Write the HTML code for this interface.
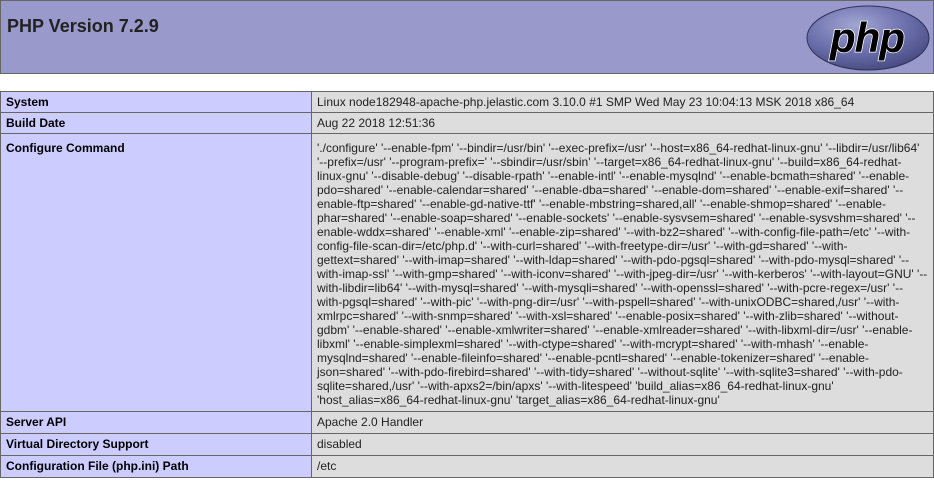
<!DOCTYPE html>
<html><head><meta charset="utf-8"><style>
body{margin:0;background:#fff;font-family:"Liberation Sans",sans-serif;color:#222}
table{border-collapse:collapse;width:934px;border:0}
td{border:1px solid #666;font-size:12px;vertical-align:baseline;padding:3px 5px;line-height:14px}
.h{background:#99c;height:72px;vertical-align:top;padding:0}
.h h1{font-size:18px;margin:0;position:absolute;left:6px;top:18px;color:#222}
.e{background:#ccf;width:300px;font-weight:bold;color:#000}
.v{background:#ddd;white-space:nowrap}
.t td{padding-bottom:4px}
</style></head><body>
<table><tr><td class="h" style="position:relative;height:72px">
<h1>PHP Version 7.2.9</h1>
<svg style="position:absolute;left:805px;top:4px" width="124" height="66" viewBox="0 0 124 66">
<defs><radialGradient id="g" cx="0.4" cy="0.3" r="0.75"><stop offset="0" stop-color="#a2a6d2"/><stop offset="0.55" stop-color="#6c70ad"/><stop offset="1" stop-color="#45487d"/></radialGradient></defs>
<ellipse cx="62" cy="33" rx="61" ry="32" fill="url(#g)" stroke="#2f3158" stroke-width="1"/>
<text x="61" y="47" text-anchor="middle" font-family="Liberation Sans,sans-serif" font-style="italic" font-weight="bold" font-size="42" fill="#000" stroke="#fff" stroke-width="1.5" paint-order="stroke" letter-spacing="-1">php</text>
</svg>
</td></tr></table>
<div style="height:17px"></div>
<table>
<tr><td class="e">System</td><td class="v">Linux node182948-apache-php.jelastic.com 3.10.0 #1 SMP Wed May 23 10:04:13 MSK 2018 x86_64</td></tr>
<tr><td class="e">Build Date</td><td class="v">Aug 22 2018 12:51:36</td></tr>
<tr><td class="e" style="padding-top:7px;padding-bottom:4px">Configure Command</td><td class="v" style="padding-top:7px;padding-bottom:4px">'./configure' '--enable-fpm' '--bindir=/usr/bin' '--exec-prefix=/usr' '--host=x86_64-redhat-linux-gnu' '--libdir=/usr/lib64'<br>
'--prefix=/usr' '--program-prefix=' '--sbindir=/usr/sbin' '--target=x86_64-redhat-linux-gnu' '--build=x86_64-redhat-<br>
linux-gnu' '--disable-debug' '--disable-rpath' '--enable-intl' '--enable-mysqlnd' '--enable-bcmath=shared' '--enable-<br>
pdo=shared' '--enable-calendar=shared' '--enable-dba=shared' '--enable-dom=shared' '--enable-exif=shared' '--<br>
enable-ftp=shared' '--enable-gd-native-ttf' '--enable-mbstring=shared,all' '--enable-shmop=shared' '--enable-<br>
phar=shared' '--enable-soap=shared' '--enable-sockets' '--enable-sysvsem=shared' '--enable-sysvshm=shared' '--<br>
enable-wddx=shared' '--enable-xml' '--enable-zip=shared' '--with-bz2=shared' '--with-config-file-path=/etc' '--with-<br>
config-file-scan-dir=/etc/php.d' '--with-curl=shared' '--with-freetype-dir=/usr' '--with-gd=shared' '--with-<br>
gettext=shared' '--with-imap=shared' '--with-ldap=shared' '--with-pdo-pgsql=shared' '--with-pdo-mysql=shared' '--<br>
with-imap-ssl' '--with-gmp=shared' '--with-iconv=shared' '--with-jpeg-dir=/usr' '--with-kerberos' '--with-layout=GNU' '--<br>
with-libdir=lib64' '--with-mysql=shared' '--with-mysqli=shared' '--with-openssl=shared' '--with-pcre-regex=/usr' '--<br>
with-pgsql=shared' '--with-pic' '--with-png-dir=/usr' '--with-pspell=shared' '--with-unixODBC=shared,/usr' '--with-<br>
xmlrpc=shared' '--with-snmp=shared' '--with-xsl=shared' '--enable-posix=shared' '--with-zlib=shared' '--without-<br>
gdbm' '--enable-shared' '--enable-xmlwriter=shared' '--enable-xmlreader=shared' '--with-libxml-dir=/usr' '--enable-<br>
libxml' '--enable-simplexml=shared' '--with-ctype=shared' '--with-mcrypt=shared' '--with-mhash' '--enable-<br>
mysqlnd=shared' '--enable-fileinfo=shared' '--enable-pcntl=shared' '--enable-tokenizer=shared' '--enable-<br>
json=shared' '--with-pdo-firebird=shared' '--with-tidy=shared' '--without-sqlite' '--with-sqlite3=shared' '--with-pdo-<br>
sqlite=shared,/usr' '--with-apxs2=/bin/apxs' '--with-litespeed' 'build_alias=x86_64-redhat-linux-gnu'<br>
'host_alias=x86_64-redhat-linux-gnu' 'target_alias=x86_64-redhat-linux-gnu'</td></tr>
<tr class="t"><td class="e">Server API</td><td class="v">Apache 2.0 Handler</td></tr>
<tr class="t"><td class="e">Virtual Directory Support</td><td class="v">disabled</td></tr>
<tr class="t"><td class="e">Configuration File (php.ini) Path</td><td class="v">/etc</td></tr>
</table>
</body></html>
